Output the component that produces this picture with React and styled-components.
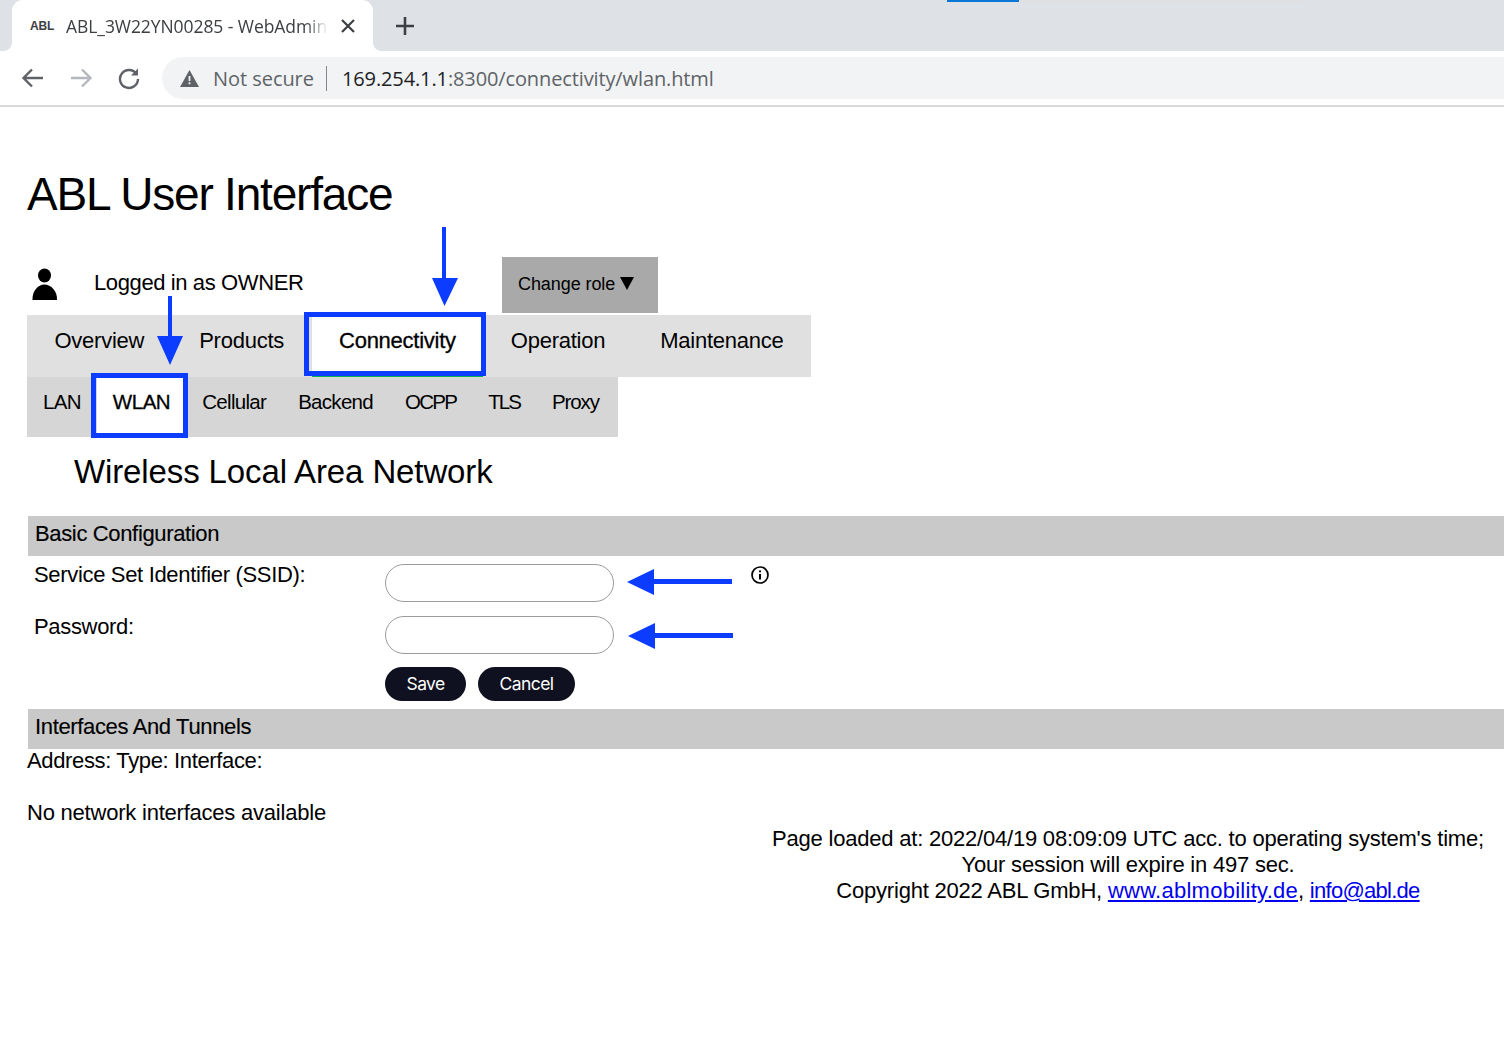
import React from "react"
import styled, { createGlobalStyle } from "styled-components"

const GlobalStyle = createGlobalStyle`
  html, body {
    margin: 0;
    padding: 0;
    background: #fff;
    color: #000;
    font-family: "Liberation Sans", Arial, sans-serif;
  }
  * { box-sizing: border-box; }
`

const Shell = styled.div`
  position: relative;
  width: 1504px;
  height: 1045px;
  overflow: hidden;
`

/* browser chrome */
const TabStrip = styled.div`
  position: relative;
  display: flex;
  align-items: flex-end;
  height: 51px;
  padding-left: 12px;
  background: #dee1e6;
`

const Tab = styled.div`
  position: relative;
  display: flex;
  align-items: center;
  width: 361px;
  height: 51px;
  padding: 0 18px 0 18px;
  background: #fff;
  border-radius: 11px 11px 0 0;
  &::before, &::after {
    content: "";
    position: absolute;
    bottom: 0;
    width: 8px;
    height: 8px;
    background: radial-gradient(circle at var(--cx) 0, #dee1e6 7.5px, #fff 8px);
  }
  &::before { left: -8px; --cx: 0; }
  &::after { right: -8px; --cx: 100%; }
`

const Favicon = styled.span`
  width: 36px;
  font: bold 12px "Liberation Sans", sans-serif;
  letter-spacing: -0.2px;
  color: #3c4043;
`

const TabTitle = styled.span`
  flex: 1;
  overflow: hidden;
  white-space: nowrap;
  font: 17.5px "Open Sans", sans-serif;
  letter-spacing: -0.07px;
  color: #3c4043;
  mask-image: linear-gradient(to right, #000 240px, transparent 262px);
`

const NewTab = styled.div`
  display: flex;
  align-items: center;
  height: 51px;
  margin-left: 22px;
`

const Progress = styled.div`
  position: absolute;
  top: 0;
  left: 947px;
  width: 361px;
  height: 2px;
  background: #e0e0e2;
  &::before {
    content: "";
    display: block;
    width: 72px;
    height: 2px;
    background: #0b76d6;
  }
`

const Toolbar = styled.div`
  display: flex;
  align-items: center;
  height: 56px;
  padding: 0 0 0 21px;
  background: #fff;
  border-bottom: 2px solid #dadada;
`

const NavIcon = styled.svg`
  display: block;
  width: 24px;
  height: 24px;
  margin-right: 24px;
  flex: none;
  fill: none;
  stroke: ${({ $muted }) => ($muted ? "#b4b7bb" : "#5f6368")};
  stroke-width: 2.4;
`

const Omnibox = styled.div`
  display: flex;
  align-items: center;
  flex: 1;
  height: 42px;
  margin-left: -3px;
  padding-left: 18px;
  background: #f1f3f4;
  border-radius: 21px 0 0 21px;
  font: 20px "Open Sans", sans-serif;
`

const NotSecure = styled.span`
  margin-left: 14px;
  padding-right: 12px;
  color: #5f6368;
  border-right: 1.5px solid #80868b;
  letter-spacing: -0.05px;
  line-height: 25px;
`

const UrlHost = styled.span`
  margin-left: 15px;
  color: #202124;
  letter-spacing: -0.12px;
`

const UrlPath = styled.span`
  color: #5f6368;
  letter-spacing: -0.12px;
`

/* page */
const Page = styled.main`
  padding: 0 0 0 27px;
  font-size: 22px;
  line-height: 26px;
`

const Heading = styled.h1`
  height: 150px;
  margin: 0;
  padding-top: 60px;
  font-size: 46px;
  font-weight: 400;
  line-height: 54px;
  letter-spacing: -1.2px;
`

const UserRow = styled.div`
  display: flex;
  height: 58px;
`

const UserLabel = styled.div`
  display: flex;
  align-items: center;
  width: 475px;
  padding: 0 0 6px 5px;
  letter-spacing: -0.39px;
`

const UserIcon = styled.svg`
  width: 27px;
  height: 34px;
  margin: 4px 35px 0 0;
`

const RoleButton = styled.button`
  display: flex;
  align-items: center;
  gap: 5px;
  width: 156px;
  height: 56px;
  padding: 0 0 2px 16px;
  border: 0;
  background: #a9a9a9;
  color: #000;
  font: 18px "Liberation Sans", sans-serif;
  letter-spacing: -0.08px;
`

const Caret = styled.svg`
  width: 14px;
  height: 14px;
  margin-bottom: 3px;
`

const MainNav = styled.nav`
  display: flex;
  align-self: flex-start;
  width: 784px;
  height: 62px;
  background: #e0e0e0;
  letter-spacing: -0.25px;
`

const SubNav = styled.nav`
  display: flex;
  width: 591px;
  height: 60px;
  background: #d6d6d6;
  font-size: 20.5px;
`

const MainItem = styled.a`
  position: relative;
  display: flex;
  align-items: center;
  justify-content: center;
  flex: none;
  padding: 0 27.5px 10px;
  white-space: nowrap;
  ${({ $active }) => $active && `
    background: #fff;
    padding-bottom: 7px;
    border-bottom: 3px solid #00b050;
    -webkit-text-stroke: 0.3px #000;
  `}
`

const Highlight = styled.span`
  position: absolute;
  border: 5px solid #0b3cff;
  pointer-events: none;
`

const SubItem = styled.a`
  position: relative;
  display: flex;
  align-items: center;
  flex: none;
  padding: 0 16px 11px;
  white-space: nowrap;
  letter-spacing: ${({ $spacing = -0.7 }) => $spacing}px;
  ${({ $active }) => $active && `
    background: #fff;
    -webkit-text-stroke: 0.3px #000;
  `}
`

const SectionTitle = styled.h2`
  height: 79px;
  margin: 0;
  padding: 16px 0 0 47px;
  font-size: 33px;
  font-weight: 400;
  line-height: 38px;
  letter-spacing: -0.12px;
`

const SectionBar = styled.div`
  display: flex;
  align-items: center;
  height: 40px;
  margin-left: 1px;
  padding: 0 0 4px 7px;
  background: #c9c9c9;
  letter-spacing: -0.35px;
  -webkit-text-stroke: 0.15px #000;
`

const FormGrid = styled.div`
  display: grid;
  grid-template-columns: 351px 229px 155px 1fr;
  grid-template-rows: 52px 52px 42px;
  padding: 8px 0 0 7px;
  height: 153px;
`

const FieldLabel = styled.label`
  line-height: 22px;
  letter-spacing: -0.33px;
`

const Input = styled.div`
  width: 229px;
  height: 38px;
  border: 1px solid #9c9c9c;
  border-radius: 19px;
  background: #fff;
`

const InfoSlot = styled.div`
  grid-column: 3;
  text-align: right;
`

const Actions = styled.div`
  grid-column: 2 / 4;
  display: flex;
  gap: 12px;
  margin-top: -1px;
`

const PillButton = styled.button`
  height: 34px;
  padding: 0 21.5px 2px;
  border: 0;
  border-radius: 17px;
  background: #0f1020;
  color: #fff;
  font: 17.5px Inter, sans-serif;
  letter-spacing: -0.6px;
`

const InterfaceList = styled.div`
  margin-top: -1px;
`

const Plain = styled.div`
  height: 26px;
  letter-spacing: ${({ $spacing }) => $spacing}px;
`

const Footer = styled.footer`
  width: 730px;
  margin: 0 11px 0 auto;
  text-align: center;
  white-space: nowrap;
  letter-spacing: -0.21px;
`

const ExtLink = styled.a`
  color: #0000ee;
  text-decoration: underline;
  letter-spacing: ${({ $spacing }) => $spacing}px;
`

const Overlay = styled.svg`
  position: absolute;
  top: 0;
  left: 0;
  pointer-events: none;
`

const arrowPaths = [
  "M442 227 L442 278 L432 278 L444.5 306 L458 278 L446 278 L446 227 Z",
  "M168 296 L168 336 L157 336 L170 365 L183 336 L172 336 L172 296 Z",
  "M732 579 L654 579 L654 569 L627 582 L654 595 L654 584 L732 584 Z",
  "M733 633 L655 633 L655 623 L628 636 L655 649 L655 638 L733 638 Z",
]

const App = () => (
  <Shell>
    <GlobalStyle />
    <TabStrip>
      <Tab>
        <Favicon>ABL</Favicon>
        <TabTitle>ABL_3W22YN00285 - WebAdmin</TabTitle>
        <svg width="14" height="14" viewBox="0 0 14 14" stroke="#3c4043" strokeWidth="2.2">
          <path d="M1 1 L13 13 M13 1 L1 13" />
        </svg>
      </Tab>
      <NewTab>
        <svg width="20" height="20" viewBox="0 0 20 20" stroke="#3c4043" strokeWidth="2.6">
          <path d="M10 1 V19 M1 10 H19" />
        </svg>
      </NewTab>
      <Progress />
    </TabStrip>
    <Toolbar>
      <NavIcon viewBox="0 0 24 24">
        <path d="M22 12 H3 M11 3.5 L2.5 12 L11 20.5" />
      </NavIcon>
      <NavIcon viewBox="0 0 24 24" $muted>
        <path d="M2 12 H21 M13 3.5 L21.5 12 L13 20.5" />
      </NavIcon>
      <NavIcon viewBox="0 0 24 24">
        <path d="M19.5 8 A9 9 0 1 0 21 13" />
        <path d="M21 2.5 V9.5 H14" fill="#5f6368" stroke="none" />
      </NavIcon>
      <Omnibox>
        <svg width="19" height="17" viewBox="0 0 19 17">
          <path d="M9.5 0 L19 17 H0 Z" fill="#5f6368" />
          <path d="M8.6 6 H10.4 V11 H8.6 Z M8.6 12.3 H10.4 V14.2 H8.6 Z" fill="#f1f3f4" />
        </svg>
        <NotSecure>Not secure</NotSecure>
        <UrlHost>169.254.1.1</UrlHost>
        <UrlPath>:8300/connectivity/wlan.html</UrlPath>
      </Omnibox>
    </Toolbar>

    <Page>
      <Heading>ABL User Interface</Heading>
      <UserRow>
        <UserLabel>
          <UserIcon viewBox="0 0 27 34">
            <ellipse cx="12.5" cy="7.5" rx="6.5" ry="7" />
            <path d="M0.5 32 C0 23 6 16.5 12.5 16.5 C19 16.5 25.5 23 25 32 Z" />
          </UserIcon>
          Logged in as OWNER
        </UserLabel>
        <RoleButton>
          Change role
          <Caret viewBox="0 0 14 14">
            <path d="M0 1 H14 L7 14 Z" />
          </Caret>
        </RoleButton>
      </UserRow>
      <MainNav>
        <MainItem>Overview</MainItem>
        <MainItem>Products</MainItem>
        <MainItem $active>
          Connectivity
          <Highlight style={{ inset: "-3px -3px -2px -8px" }} />
        </MainItem>
        <MainItem>Operation</MainItem>
        <MainItem>Maintenance</MainItem>
      </MainNav>
      <SubNav>
        <SubItem>LAN</SubItem>
        <SubItem $active $spacing={-0.45}>
          WLAN
          <Highlight style={{ inset: "-4px -2px -1px -6px" }} />
        </SubItem>
        <SubItem>Cellular</SubItem>
        <SubItem>Backend</SubItem>
        <SubItem $spacing={-1.7}>OCPP</SubItem>
        <SubItem $spacing={-2}>TLS</SubItem>
        <SubItem $spacing={-1.1}>Proxy</SubItem>
      </SubNav>
      <SectionTitle>Wireless Local Area Network</SectionTitle>

      <SectionBar>Basic Configuration</SectionBar>
      <FormGrid>
        <FieldLabel>Service Set Identifier (SSID):</FieldLabel>
        <Input />
        <InfoSlot>
          <svg width="18" height="18" viewBox="0 0 18 18" fill="none" stroke="#000" strokeWidth="1.7">
            <circle cx="9" cy="9" r="8" />
            <path d="M9 8 V13.5 M9 4.5 V6.3" strokeWidth="2" />
          </svg>
        </InfoSlot>
        <span />
        <FieldLabel>Password:</FieldLabel>
        <Input />
        <span />
        <span />
        <span />
        <Actions>
          <PillButton>Save</PillButton>
          <PillButton>Cancel</PillButton>
        </Actions>
      </FormGrid>

      <SectionBar>Interfaces And Tunnels</SectionBar>
      <InterfaceList>
        <Plain $spacing={-0.36}>Address: Type: Interface:</Plain>
        <Plain />
        <Plain $spacing={-0.22}>No network interfaces available</Plain>
      </InterfaceList>
      <Footer>
        Page loaded at: 2022/04/19 08:09:09 UTC acc. to operating system's time;
        <br />
        Your session will expire in 497 sec.
        <br />
        Copyright 2022 ABL GmbH, <ExtLink $spacing={0.26}>www.ablmobility.de</ExtLink>, <ExtLink $spacing={-0.72}>info@abl.de</ExtLink>
      </Footer>
    </Page>

    <Overlay width="1504" height="1045" viewBox="0 0 1504 1045">
      {arrowPaths.map(d => (
        <path key={d} d={d} fill="#0b3cff" />
      ))}
    </Overlay>
  </Shell>
)

export default App
